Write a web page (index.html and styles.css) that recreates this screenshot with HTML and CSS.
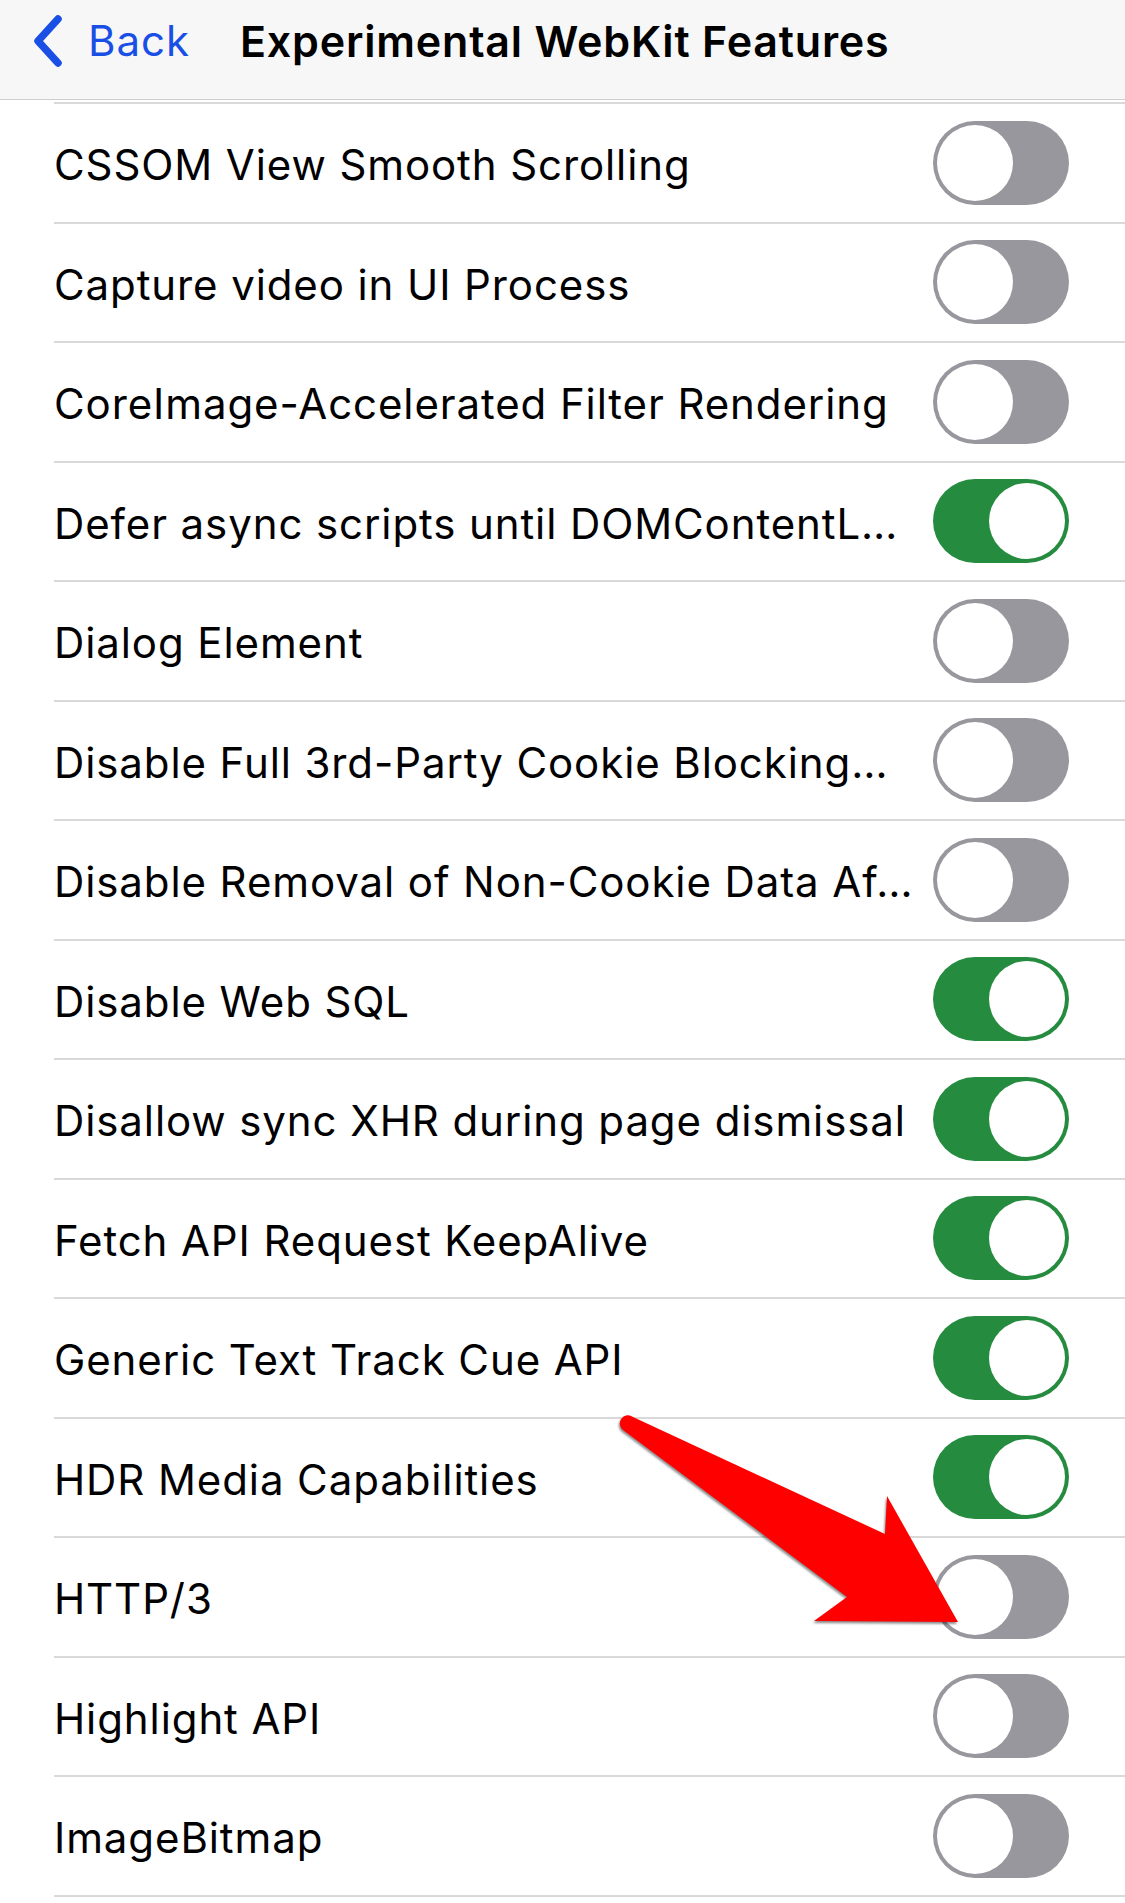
FILE: index.html
```html
<!DOCTYPE html>
<html lang="en">

<head>
    <meta charset="UTF-8">
    <meta name="viewport" content="width=device-width, initial-scale=1.0">
    <title>Experimental WebKit Features</title>
    <link rel="stylesheet" href="styles.css">
</head>

<body>
    <div class="navbar">
        <div class="back">
            <svg class="chevron" viewBox="0 0 32 52" width="32" height="52">
                <path d="M26 4 L6 26 L26 48" fill="none" stroke="#1a4fe6" stroke-width="7.5"
                    stroke-linecap="round" stroke-linejoin="round" />
            </svg>
            <span>Back</span>
        </div>
        <div class="title">Experimental WebKit Features</div>
    </div>

    <div class="list">
        <div class="row"><span class="label">CSSOM View Smooth Scrolling</span><span class="toggle"></span></div>
        <div class="row"><span class="label">Capture video in UI Process</span><span class="toggle"></span></div>
        <div class="row"><span class="label">CoreImage-Accelerated Filter Rendering</span><span class="toggle"></span></div>
        <div class="row"><span class="label">Defer async scripts until DOMContentL…</span><span class="toggle on"></span></div>
        <div class="row"><span class="label">Dialog Element</span><span class="toggle"></span></div>
        <div class="row"><span class="label">Disable Full 3rd-Party Cookie Blocking…</span><span class="toggle"></span></div>
        <div class="row"><span class="label">Disable Removal of Non-Cookie Data Af…</span><span class="toggle"></span></div>
        <div class="row"><span class="label">Disable Web SQL</span><span class="toggle on"></span></div>
        <div class="row"><span class="label">Disallow sync XHR during page dismissal</span><span class="toggle on"></span></div>
        <div class="row"><span class="label">Fetch API Request KeepAlive</span><span class="toggle on"></span></div>
        <div class="row"><span class="label">Generic Text Track Cue API</span><span class="toggle on"></span></div>
        <div class="row"><span class="label">HDR Media Capabilities</span><span class="toggle on"></span></div>
        <div class="row"><span class="label">HTTP/3</span><span class="toggle"></span></div>
        <div class="row"><span class="label">Highlight API</span><span class="toggle"></span></div>
        <div class="row"><span class="label">ImageBitmap</span><span class="toggle"></span></div>
    </div>

    <!-- annotation arrow pointing at HTTP/3 -->
    <svg class="arrow" viewBox="0 0 380 240" width="380" height="240">
        <path d="M33 17 L285 134 L287 96 L358 222 L214 221 L247 197 L23 30 A8 8 0 0 1 33 17 Z" fill="#ff0000" />
    </svg>
</body>

</html>
```

FILE: styles.css
```css
* {
    margin: 0;
    padding: 0;
    box-sizing: border-box;
}

body {
    background: #fff;
    font-family: Inter, "Noto Sans", sans-serif;
    color: #000;
}

.navbar {
    height: 100px;
    background: #f7f7f7;
    border-bottom: 1px solid #cfcfcf;
    display: flex;
    align-items: center;
    padding-left: 32px;
    padding-bottom: 18px;
}

.back {
    display: flex;
    align-items: center;
    color: #1a4fe6;
    font-size: 42px;
    letter-spacing: 1px;
    width: 208px;
}

.chevron {
    margin-right: 24px;
}

.title {
    font-size: 43px;
    font-weight: 600;
    letter-spacing: 0.8px;
}

.list {
    margin-top: 2px;
    margin-left: 54px;
}

.row {
    height: 119.5px;
    border-top: 2px solid #d9d9d9;
    display: flex;
    align-items: center;
    justify-content: space-between;
    padding-right: 56px;
}

.row:last-child {
    border-bottom: 2px solid #d9d9d9;
    height: 121.5px;
}

.label {
    font-size: 42px;
    letter-spacing: 0.9px;
    white-space: nowrap;
    padding-top: 4px;
}

.toggle {
    position: relative;
    width: 136px;
    height: 84px;
    border-radius: 42px;
    background: #98979d;
    flex-shrink: 0;
}

.toggle::after {
    content: "";
    position: absolute;
    top: 4px;
    left: 4px;
    width: 76px;
    height: 76px;
    border-radius: 50%;
    background: #fff;
}

.toggle.on {
    background: #258b3f;
}

.toggle.on::after {
    left: 56px;
}

.arrow {
    position: absolute;
    left: 600px;
    top: 1400px;
    filter: drop-shadow(-1px 2px 1px rgba(0, 0, 0, 0.45));
}
```
